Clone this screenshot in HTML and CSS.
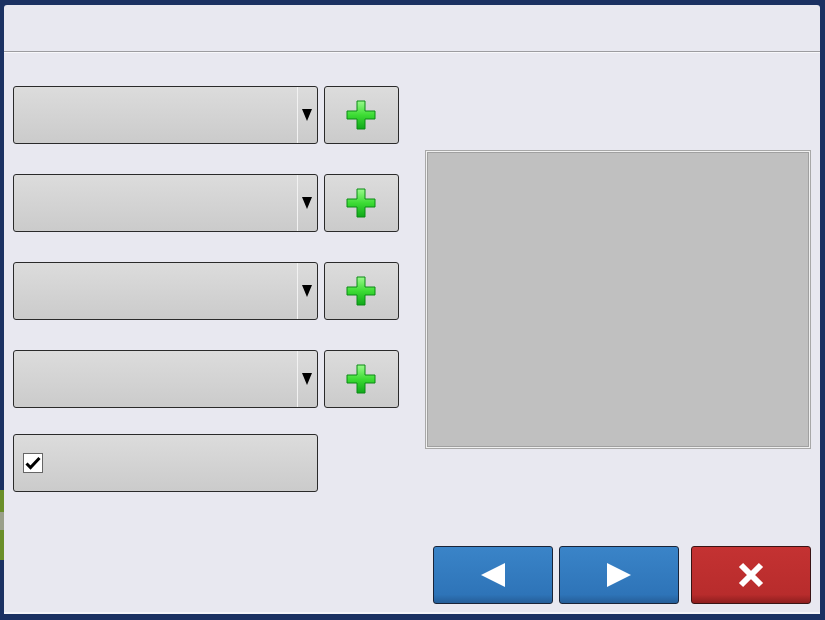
FILE: index.html
```html
<!DOCTYPE html>
<html>
<head>
<meta charset="utf-8">
<link rel="stylesheet" href="styles.css">
</head>
<body>
<div class="desk">
  <div class="dialog">
    <div class="titlebar"></div>
    <div class="content">
      <div class="left">
        <div class="row">
          <div class="combo"><div class="combo-field"></div><div class="combo-arrow"><svg width="10" height="12" viewBox="0 0 10 12"><path d="M0 0H10L5 12Z" fill="#000"/></svg></div></div>
          <button class="plus"><svg width="30" height="30" viewBox="0 0 30 30"><defs><linearGradient id="g1" x1="0" y1="0" x2="0" y2="1"><stop offset="0" stop-color="#9af98c"/><stop offset="0.5" stop-color="#3ddc34"/><stop offset="1" stop-color="#10a81a"/></linearGradient></defs><path d="M11 1H19V11H29V19H19V29H11V19H1V11H11Z" fill="url(#g1)" stroke="#0b8a15" stroke-width="1"/></svg></button>
        </div>
        <div class="row">
          <div class="combo"><div class="combo-field"></div><div class="combo-arrow"><svg width="10" height="12" viewBox="0 0 10 12"><path d="M0 0H10L5 12Z" fill="#000"/></svg></div></div>
          <button class="plus"><svg width="30" height="30" viewBox="0 0 30 30"><path d="M11 1H19V11H29V19H19V29H11V19H1V11H11Z" fill="url(#g1)" stroke="#0b8a15" stroke-width="1"/></svg></button>
        </div>
        <div class="row">
          <div class="combo"><div class="combo-field"></div><div class="combo-arrow"><svg width="10" height="12" viewBox="0 0 10 12"><path d="M0 0H10L5 12Z" fill="#000"/></svg></div></div>
          <button class="plus"><svg width="30" height="30" viewBox="0 0 30 30"><path d="M11 1H19V11H29V19H19V29H11V19H1V11H11Z" fill="url(#g1)" stroke="#0b8a15" stroke-width="1"/></svg></button>
        </div>
        <div class="row">
          <div class="combo"><div class="combo-field"></div><div class="combo-arrow"><svg width="10" height="12" viewBox="0 0 10 12"><path d="M0 0H10L5 12Z" fill="#000"/></svg></div></div>
          <button class="plus"><svg width="30" height="30" viewBox="0 0 30 30"><path d="M11 1H19V11H29V19H19V29H11V19H1V11H11Z" fill="url(#g1)" stroke="#0b8a15" stroke-width="1"/></svg></button>
        </div>
        <div class="check-btn">
          <span class="checkbox"><svg width="16" height="14" viewBox="0 0 16 14"><path d="M1.5 7.5L5.5 11.5L14.5 2" fill="none" stroke="#000" stroke-width="3"/></svg></span>
        </div>
      </div>
      <div class="right">
        <div class="preview"></div>
      </div>
    </div>
    <div class="footer">
      <button class="nav blue"><svg width="26" height="26" viewBox="0 0 26 26"><path d="M1 13L25 1V25Z" fill="#fff"/></svg></button>
      <button class="nav blue"><svg width="26" height="26" viewBox="0 0 26 26"><path d="M25 13L1 1V25Z" fill="#fff"/></svg></button>
      <button class="nav red"><svg width="26" height="26" viewBox="0 0 26 26"><path d="M3 3L23 23M23 3L3 23" stroke="#fff" stroke-width="6"/></svg></button>
    </div>
  </div>
</div>
</body>
</html>
```
FILE: styles.css
```css
html, body {
  margin: 0;
  padding: 0;
  width: 825px;
  height: 620px;
  overflow: hidden;
  font-family: "Liberation Sans", Arial, sans-serif;
}
body {
  background: linear-gradient(to bottom, #1b3162 0, #1b3162 490px, #6a8f2a 490px, #6a8f2a 512px, #9aa08a 512px, #9aa08a 530px, #6a8f2a 530px, #6a8f2a 560px, #1b3162 560px);
}
.desk {
  width: 825px;
  height: 620px;
  background: linear-gradient(to right, transparent 0, transparent 819px, #1b3162 819px);
  box-sizing: border-box;
  padding: 5px 5px 0 4px;
}
.dialog {
  width: 816px;
  height: 609px;
  background: #e8e8f0;
  border-radius: 3px 3px 0 0;
  border-bottom: 2px solid #f4f4f8;
  box-sizing: border-box;
  display: flex;
  flex-direction: column;
}
.titlebar {
  height: 46px;
  border-bottom: 1px solid #9c9ca0;
  box-shadow: 0 1px 0 #f8f8fb;
  flex: none;
}
.content {
  display: flex;
  gap: 26px;
  padding: 34px 9px 0 9px;
}
.left {
  width: 386px;
  display: flex;
  flex-direction: column;
}
.row {
  display: flex;
  gap: 6px;
  height: 58px;
  margin-bottom: 30px;
}
.row:nth-child(4) {
  margin-bottom: 26px;
}
.combo {
  width: 305px;
  height: 58px;
  box-sizing: border-box;
  border: 1px solid #2a2a2a;
  border-radius: 3px;
  background: linear-gradient(to bottom, #dcdcdc, #cbcbcb);
  display: flex;
}
.combo-field {
  flex: 1;
  border-right: 1px solid #f2f2f2;
}
.combo-arrow {
  width: 19px;
  display: flex;
  align-items: center;
  justify-content: center;
}
.combo-arrow svg {
  margin-left: -1px;
}
.plus {
  width: 75px;
  height: 58px;
  box-sizing: border-box;
  border: 1px solid #2a2a2a;
  border-radius: 3px;
  background: linear-gradient(to bottom, #dcdcdc, #cbcbcb);
  display: flex;
  align-items: center;
  justify-content: center;
  padding: 0 2px 0 0;
}
.check-btn {
  width: 305px;
  height: 58px;
  box-sizing: border-box;
  border: 1px solid #2a2a2a;
  border-radius: 3px;
  background: linear-gradient(to bottom, #dcdcdc, #cbcbcb);
  display: flex;
  align-items: center;
  padding-left: 9px;
}
.checkbox {
  width: 20px;
  height: 20px;
  box-sizing: border-box;
  background: #fff;
  border: 1px solid #666;
  display: flex;
  align-items: center;
  justify-content: center;
}
.right {
  width: 386px;
  padding-top: 64px;
}
.preview {
  width: 386px;
  height: 299px;
  box-sizing: border-box;
  border: 1px solid #a8a8a8;
  box-shadow: inset 0 0 0 1px #f0f0f0, inset 0 0 0 2px #a0a0a0;
  background: #c0c0c0;
}
.footer {
  margin-top: auto;
  display: flex;
  justify-content: flex-end;
  padding: 0 9px 8px 0;
  gap: 6px;
}
.nav {
  width: 120px;
  height: 58px;
  box-sizing: border-box;
  border: 1px solid #1a2438;
  border-radius: 3px;
  display: flex;
  align-items: center;
  justify-content: center;
  padding: 0;
}
.blue {
  background: linear-gradient(to bottom, #3a84c8, #2e74b8 85%, #255e98);
}
.red {
  margin-left: 6px;
  border-color: #3a1414;
  background: linear-gradient(to bottom, #c43232, #b82c2c 85%, #8e1e1e);
}
```
